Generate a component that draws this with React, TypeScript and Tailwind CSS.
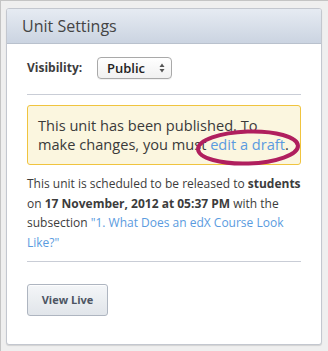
import React from "react";

export default function App() {
  return (
    <div
      className="relative w-[328px] h-[351px] bg-[#efefef] border-l border-t border-[#c4c4c4] overflow-hidden"
      style={{ fontFamily: '"Open Sans", "Noto Sans", sans-serif' }}
    >
      <div className="ml-[5px] mt-[7px] w-[316px] h-[337px] bg-white border border-[#c3c7cf] rounded-[3px] shadow-[0_1px_1px_rgba(0,0,0,0.12)] overflow-hidden">
        <div className="h-[35px] bg-gradient-to-b from-[#e6ebf2] to-[#cbd4e1] border-b border-[#b9c1cd] pl-[15px] flex items-center">
          <span className="text-[16px] text-[#444] leading-none">Unit Settings</span>
        </div>
        <div className="px-[20px] pt-[13px]">
          <div className="flex items-center h-[22px]">
            <span className="text-[12px] font-bold text-[#3c3c3c] w-[70px]">Visibility:</span>
            <div className="w-[75px] h-[22px] rounded-[4px] border border-[#a9a9a9] bg-gradient-to-b from-white to-[#f1f1f1] flex items-center pl-[9px] pr-[6px] justify-between shadow-[0_1px_0_rgba(0,0,0,0.05)]">
              <span className="text-[13px] font-semibold text-[#222] leading-none">Public</span>
              <svg width="6" height="10" viewBox="0 0 6 10">
                <path d="M3 0.5 L5.5 4 L0.5 4 Z" fill="#555" />
                <path d="M3 9.5 L5.5 6 L0.5 6 Z" fill="#555" />
              </svg>
            </div>
          </div>
          <div className="mt-[15px] h-px bg-[#c9cdd6]" />
          <div className="mt-[10px] h-[60px] rounded-[3px] border border-[#f0c43f] bg-[#fbf6df] px-[10px] pt-[10px]">
            <p className="text-[14.6px] leading-[19px] text-[#3a3a3a]">
              This unit has been published. To make changes, you must{" "}
              <span className="text-[#5a9be0]">edit a draft</span>.
            </p>
          </div>
          <p className="mt-[9px] text-[12px] leading-[19.5px] text-[#3c3c3c]">
            This unit is scheduled to be released to <b>students</b> on{" "}
            <b>17 November, 2012 at 05:37 PM</b> with the subsection{" "}
            <span className="text-[#5a9be0]">"1. What Does an edX Course Look Like?"</span>
          </p>
          <div className="mt-[9px] h-px bg-[#c9cdd6]" />
          <button className="mt-[22px] w-[81px] h-[32px] rounded-[3px] border border-[#aeb5c0] bg-gradient-to-b from-[#f4f6f8] to-[#e1e5ea] text-[11px] font-bold text-[#4d5563] shadow-[inset_0_1px_0_rgba(255,255,255,0.8)]">
            View Live
          </button>
        </div>
      </div>
      <svg className="absolute left-[194px] top-[127px]" width="106" height="39" viewBox="0 0 106 39">
        <ellipse cx="53" cy="19.5" rx="50" ry="16" fill="none" stroke="#b01f5e" strokeWidth="4" transform="rotate(-2 53 19.5)" />
      </svg>
    </div>
  );
}
